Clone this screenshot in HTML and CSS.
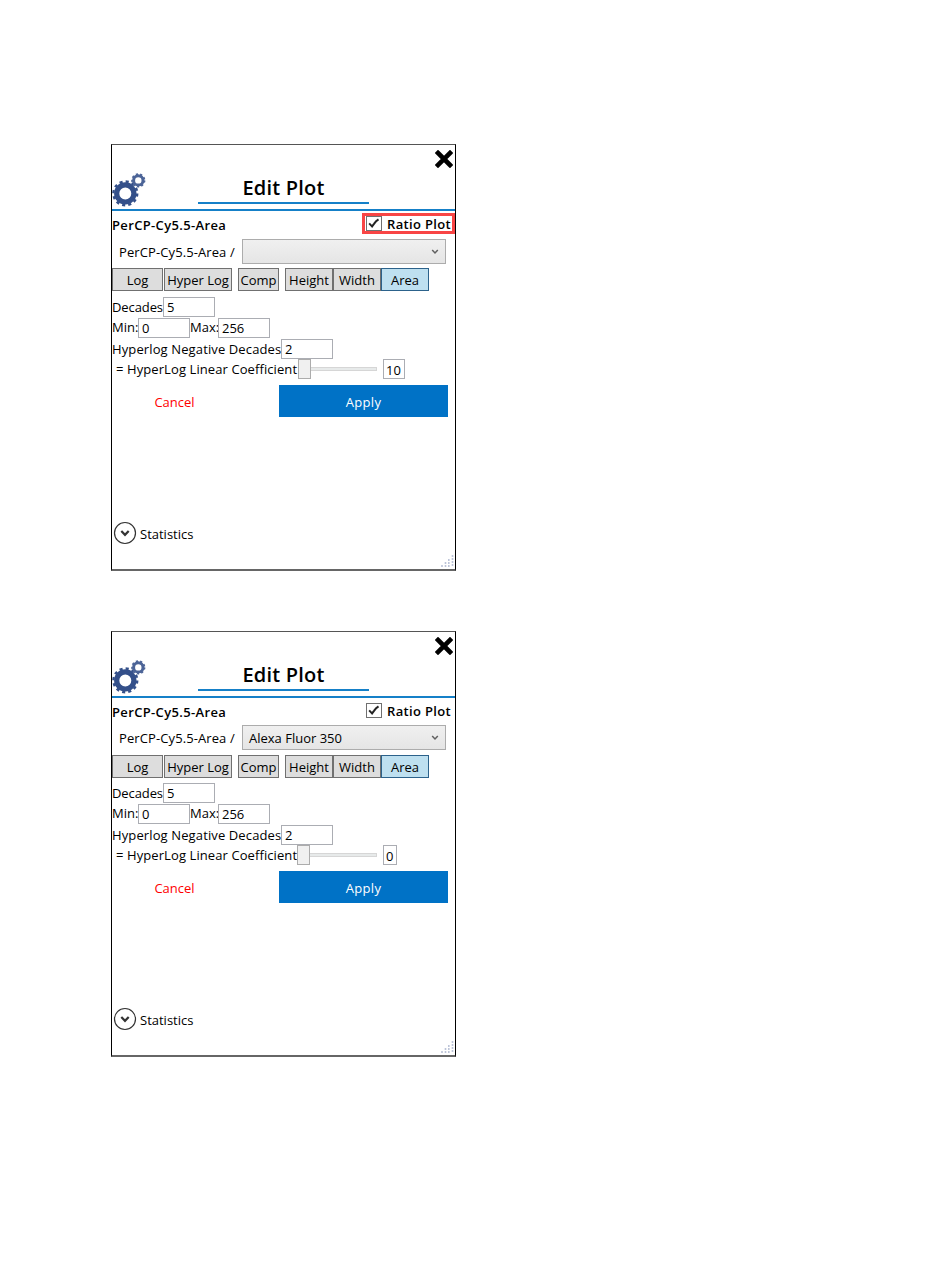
FILE: index.html
```
<!DOCTYPE html>
<html lang="en">
<head>
  <meta charset="UTF-8" />
  <title>Edit Plot</title>
  <link rel="stylesheet" href="styles.css">
</head>
<body>
  <svg class="defs" width="0" height="0">
    <symbol id="gears" viewBox="0 0 34 34">
      <circle cx="13.3" cy="20.4" r="8.6" fill="none" stroke="#34508a" stroke-width="5.2" />
      <circle cx="13.3" cy="20.4" r="11.9" fill="none" stroke="#34508a" stroke-width="2.4" stroke-dasharray="3.12 3.11" />
      <circle cx="26.3" cy="7.4" r="4.7" fill="none" stroke="#4c6497" stroke-width="3" />
      <circle cx="26.3" cy="7.4" r="6.3" fill="none" stroke="#4c6497" stroke-width="1.6" stroke-dasharray="2.2 2.2" />
    </symbol>
    <symbol id="cross" viewBox="0 0 18 18">
      <path d="M3 3 L15 15 M15 3 L3 15" stroke="#000" stroke-width="4.6" stroke-linecap="square" />
    </symbol>
    <symbol id="check" viewBox="0 0 16 15">
      <path d="M2.4 7.4 L5.8 10.8 L8.2 7.6 C9.4 5.8 10.6 4.4 13.2 2.8" fill="none" stroke="#222" stroke-width="2.3" />
    </symbol>
    <symbol id="arrow" viewBox="0 0 8 6">
      <path d="M1.2 1 L4 4 L6.8 1" fill="none" stroke="#606060" stroke-width="1.5" />
    </symbol>
    <symbol id="expander" viewBox="0 0 24 24">
      <circle cx="12" cy="12" r="10.5" fill="#fff" stroke="#333" stroke-width="1.2" />
      <path d="M8.3 10 L12 13.8 L15.7 10" fill="none" stroke="#333" stroke-width="2.2" />
    </symbol>
    <symbol id="grip" viewBox="0 0 14 14">
      <path d="M2 11v2 M5.5 8v5 M8.8 5v8 M12.5 1v12" stroke="#bcc4d8" stroke-width="1.6" stroke-dasharray="2 1" />
    </symbol>
  </svg>

  <div class="dialog">
    <div class="header">
      <svg class="gears"><use href="#gears" /></svg>
      <h1 class="title">Edit Plot</h1>
      <svg class="close"><use href="#cross" /></svg>
    </div>
    <div class="name-row">
      <span class="name">PerCP-Cy5.5-Area</span>
      <label class="ratio highlighted"><svg class="checkbox"><use href="#check" /></svg><span class="ratio-text">Ratio Plot</span></label>
    </div>
    <div class="select-row">
      <span class="select-label">PerCP-Cy5.5-Area /</span>
      <div class="select"><span class="select-text"></span><svg class="arrow"><use href="#arrow" /></svg></div>
    </div>
    <div class="buttons">
      <div class="btn log">Log</div>
      <div class="btn hyper">Hyper Log</div>
      <div class="btn comp">Comp</div>
      <div class="btn height">Height</div>
      <div class="btn width">Width</div>
      <div class="btn area">Area</div>
    </div>
    <div class="fields">
      <div class="field-row"><span class="w-decades">Decades</span><span class="input">5</span></div>
      <div class="field-row"><span class="w-min">Min:</span><span class="input">0</span><span class="w-max">Max:</span><span class="input">256</span></div>
      <div class="field-row"><span class="w-negative">Hyperlog Negative Decades</span><span class="input">2</span></div>
      <div class="field-row slider-row"><span class="w-linear">= HyperLog Linear Coefficient</span><span class="thumb"></span><span class="track"></span><span class="value">10</span></div>
    </div>
    <div class="actions">
      <div class="cancel">Cancel</div>
      <div class="apply">Apply</div>
    </div>
    <div class="statistics"><svg class="expander"><use href="#expander" /></svg><span class="statistics-text">Statistics</span></div>
    <svg class="grip"><use href="#grip" /></svg>
  </div>

  <div class="dialog second">
    <div class="header">
      <svg class="gears"><use href="#gears" /></svg>
      <h1 class="title">Edit Plot</h1>
      <svg class="close"><use href="#cross" /></svg>
    </div>
    <div class="name-row">
      <span class="name">PerCP-Cy5.5-Area</span>
      <label class="ratio"><svg class="checkbox"><use href="#check" /></svg><span class="ratio-text">Ratio Plot</span></label>
    </div>
    <div class="select-row">
      <span class="select-label">PerCP-Cy5.5-Area /</span>
      <div class="select"><span class="select-text">Alexa Fluor 350</span><svg class="arrow"><use href="#arrow" /></svg></div>
    </div>
    <div class="buttons">
      <div class="btn log">Log</div>
      <div class="btn hyper">Hyper Log</div>
      <div class="btn comp">Comp</div>
      <div class="btn height">Height</div>
      <div class="btn width">Width</div>
      <div class="btn area">Area</div>
    </div>
    <div class="fields">
      <div class="field-row"><span class="w-decades">Decades</span><span class="input">5</span></div>
      <div class="field-row"><span class="w-min">Min:</span><span class="input">0</span><span class="w-max">Max:</span><span class="input">256</span></div>
      <div class="field-row"><span class="w-negative">Hyperlog Negative Decades</span><span class="input">2</span></div>
      <div class="field-row slider-row"><span class="w-linear">= HyperLog Linear Coefficient</span><span class="thumb"></span><span class="track"></span><span class="value">0</span></div>
    </div>
    <div class="actions">
      <div class="cancel">Cancel</div>
      <div class="apply">Apply</div>
    </div>
    <div class="statistics"><svg class="expander"><use href="#expander" /></svg><span class="statistics-text">Statistics</span></div>
    <svg class="grip"><use href="#grip" /></svg>
  </div>
</body>
</html>
```
FILE: styles.css
```
* {
  box-sizing: border-box;
}

body {
  margin: 0;
  padding: 144px 0 0 111px;
  background: #fff;
  color: #000;
  font-family: "Open Sans", "Noto Sans", sans-serif;
  font-size: 13px;
  line-height: 18px;
  white-space: nowrap;
}

svg {
  display: block;
  flex: none;
}

.defs {
  position: absolute;
}

.dialog {
  position: relative;
  width: 345px;
  height: 427px;
  border: 1px solid #000;
  border-top-color: #555;
  border-bottom: 2px solid #666;
  margin-bottom: 60px;
}

.header {
  display: flex;
  height: 66px;
  border-bottom: 2px solid #1580c8;
}

.gears {
  width: 34px;
  height: 34px;
  margin-top: 28px;
}

.title {
  width: 171px;
  height: 33px;
  margin: 26px 0 0 52px;
  border-bottom: 2px solid #1580c8;
  font-size: 20px;
  font-weight: 600;
  letter-spacing: 0.2px;
  line-height: 34px;
  text-align: center;
}

.close {
  width: 18px;
  height: 18px;
  margin: 5px 2px 0 auto;
}

.name-row {
  display: flex;
  justify-content: space-between;
  height: 28px;
  padding-top: 2px;
  font-weight: 600;
}

.name {
  padding-top: 3px;
  letter-spacing: 0.35px;
}

.ratio {
  display: flex;
  align-items: center;
  width: 93px;
  height: 21px;
  border: 3px solid transparent;
  padding-left: 1px;
}

.ratio.highlighted {
  border-color: #f84545;
}

.checkbox {
  width: 16px;
  height: 15px;
  border: 1px solid #707070;
}

.ratio-text {
  margin-left: 5px;
  letter-spacing: 0.35px;
}

.select-row {
  display: flex;
  height: 25px;
}

.select-label {
  width: 130px;
  padding: 4px 0 0 7px;
  letter-spacing: 0.1px;
}

.select {
  display: flex;
  justify-content: space-between;
  align-items: center;
  width: 204px;
  border: 1px solid #acacac;
  padding: 0 6px;
  background: linear-gradient(#f0f0f0, #e5e5e5);
}

.arrow {
  width: 8px;
  height: 6px;
}

.buttons {
  display: flex;
  height: 23px;
  margin-top: 4px;
}

.btn {
  border: 1px solid #707070;
  background: #ddd;
  line-height: 23px;
  display: flex;
  justify-content: center;
}

.log {
  width: 51px;
}

.hyper {
  width: 68px;
  margin-left: 1px;
}

.comp {
  width: 41px;
  margin-left: 6px;
}

.height {
  width: 48px;
  margin-left: 6px;
}

.width {
  width: 48px;
}

.area {
  width: 48px;
  border-color: #2c628b;
  background: #bee0f0;
}

.fields {
  padding-top: 6px;
}

.field-row {
  display: flex;
  height: 21px;
  line-height: 20px;
}

.w-decades {
  width: 51px;
  letter-spacing: -0.1px;
}

.w-min {
  width: 26px;
  line-height: 19px;
}

.w-max {
  width: 28px;
  line-height: 19px;
}

.w-negative {
  width: 169px;
  letter-spacing: 0.12px;
}

.w-linear {
  width: 186px;
  padding-left: 4px;
  letter-spacing: 0.09px;
}

.input {
  width: 52px;
  height: 20px;
  border: 1px solid #abadb3;
  padding-left: 3px;
  background: #fff;
  line-height: 19px;
}

.slider-row {
  align-items: flex-start;
  margin-top: -1px;
}

.thumb {
  width: 13px;
  height: 20px;
  border: 1px solid #acacac;
  background: #f0f0f0;
}

.track {
  width: 66px;
  height: 4px;
  margin: 8px 6px 0 0;
  border: 1px solid #d6d6d6;
  border-left: 0;
  background: #e7eaea;
}

.value {
  width: 22px;
  height: 20px;
  border: 1px solid #abadb3;
  padding-left: 2px;
}

.actions {
  display: flex;
  height: 32px;
  margin-top: 5px;
  line-height: 34px;
  text-align: center;
}

.cancel {
  width: 125px;
  margin-right: 42px;
  color: #f00;
}

.apply {
  width: 169px;
  background: #0072c6;
  color: #fff;
  letter-spacing: 0.3px;
}

.statistics {
  display: flex;
  align-items: center;
  height: 24px;
  margin: 104px 0 0 1px;
}

.expander {
  width: 24px;
  height: 24px;
}

.statistics-text {
  margin: 2px 0 0 3px;
}

.grip {
  position: absolute;
  right: 1px;
  bottom: 1px;
  width: 14px;
  height: 14px;
}

.second {
  height: 426px;
}

.second .name-row {
  height: 27px;
}

.second .buttons {
  margin-top: 5px;
}

.second .fields {
  padding-top: 5px;
}

.second .w-linear {
  width: 185px;
}

.second .track {
  width: 67px;
}

.second .value {
  width: 14px;
}
```
